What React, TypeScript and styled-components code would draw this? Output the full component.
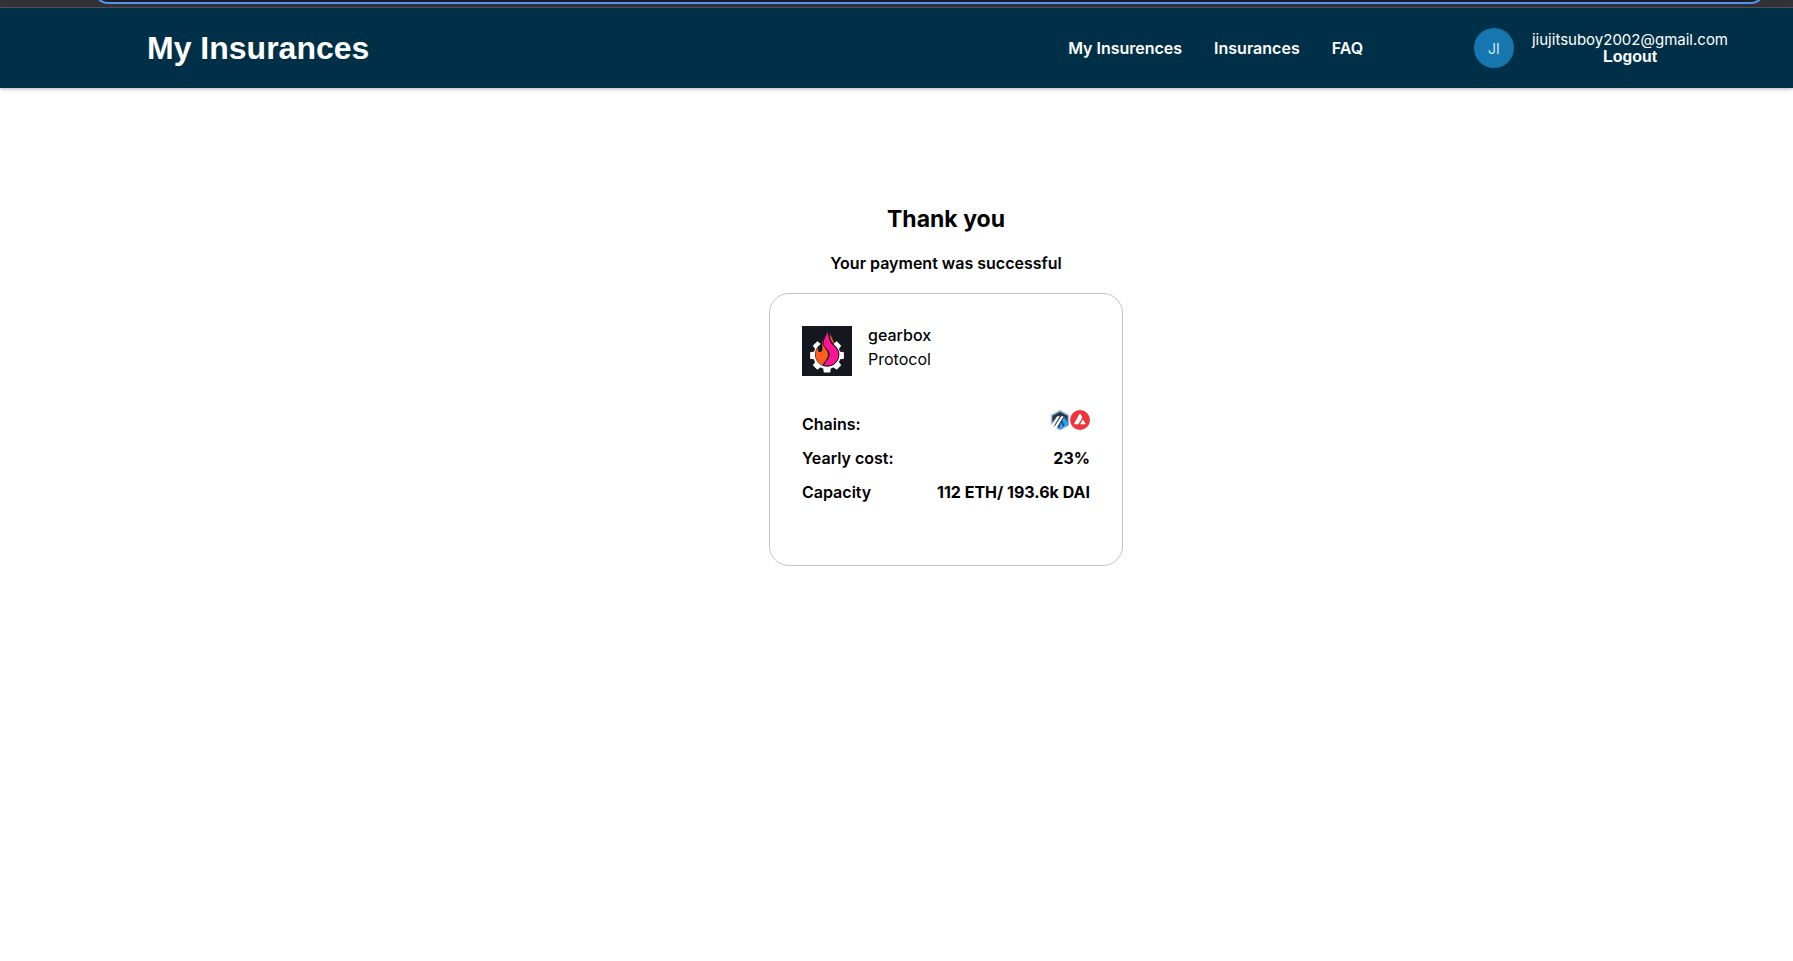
import React from "react";
import styled, { createGlobalStyle } from "styled-components";

const GlobalStyle = createGlobalStyle`
  *, *::before, *::after {
    box-sizing: border-box;
  }
  body {
    margin: 0;
    background: #ffffff;
    color: #000000;
    font-family: Inter, "Liberation Sans", sans-serif;
    font-size: 16px;
    line-height: 19px;
  }
  h1, h2, p, dl, dt, dd {
    margin: 0;
  }
`;

const BrowserEdge = styled.div`
  display: flex;
  align-items: flex-end;
  height: 8px;
  padding: 0 28px 3px 94px;
  overflow: hidden;
  background: #323135;
  border-bottom: 1px solid #58585b;
`;

const AddressBar = styled.div`
  flex: 1;
  height: 32px;
  background: #1f1f22;
  border: 2px solid #5394f6;
  border-radius: 14px;
`;

const Header = styled.header`
  display: flex;
  align-items: center;
  height: 80px;
  padding: 0 63px 0 147px;
  background: #003047;
  color: #ffffff;
  box-shadow: 0 1px 4px rgba(0, 0, 0, 0.3);
`;

const Brand = styled.h1`
  font: 700 32px/40px "Liberation Sans", Arial, sans-serif;
`;

const Nav = styled.nav`
  display: flex;
  gap: 32px;
  margin-left: auto;
`;

const NavLink = styled.a`
  color: inherit;
  font-weight: 600;
  text-decoration: none;
`;

const Account = styled.div`
  display: flex;
  align-items: center;
  gap: 16px;
  margin-left: 111px;
`;

const Avatar = styled.div`
  display: grid;
  place-items: center;
  width: 40px;
  height: 40px;
  border-radius: 50%;
  background: #1676b0;
  color: #d5e8f3;
  font-size: 14px;
`;

const AccountDetails = styled.div`
  display: flex;
  flex-direction: column;
  align-items: center;
  min-width: 200px;
  font-size: 15px;
  line-height: 17px;
`;

const LogoutButton = styled.button`
  padding: 0;
  border: 0;
  background: none;
  color: inherit;
  font: 700 16px/17px "Liberation Sans", Arial, sans-serif;
  cursor: pointer;
`;

const Main = styled.main`
  display: flex;
  flex-direction: column;
  align-items: center;
  padding: 117px 0 48px 99px;
`;

const Title = styled.h2`
  font-size: 23px;
  font-weight: 700;
  line-height: 29px;
`;

const Message = styled.p`
  margin-top: 20px;
  font-weight: 600;
`;

const Card = styled.section`
  width: 354px;
  max-width: 100%;
  margin-top: 20px;
  padding: 32px 32px 63px;
  border: 1px solid #c4c4c4;
  border-radius: 20px;
`;

const Protocol = styled.div`
  display: flex;
  gap: 16px;
`;

const ProtocolText = styled.div`
  display: flex;
  flex-direction: column;
  gap: 5px;
`;

const ProtocolName = styled.p`
  font-weight: 500;
`;

const Details = styled.dl`
  display: flex;
  flex-direction: column;
  gap: 15px;
  margin-top: 34px;
  font-weight: 600;
`;

const DetailRow = styled.div`
  display: flex;
  align-items: flex-end;
  justify-content: space-between;
`;

const DetailValue = styled.dd`
  font-weight: 700;
`;

const Chains = styled.dd`
  display: flex;
  height: 24px;
`;

const GearboxLogo = () => (
  <svg width="50" height="50" viewBox="0 0 50 50" role="img" aria-label="gearbox logo">
    <rect width="50" height="50" fill="#161820" />
    <g fill="#ffffff">
      {[0, 45, 90, 135, 180, 225, 270, 315].map((angle) => (
        <path key={angle} d="M21 18 L21.8 12.6 H28.2 L29 18Z" transform={`rotate(${angle} 25 29.5)`} />
      ))}
      <circle cx="25" cy="29.5" r="13.6" />
    </g>
    <circle cx="25" cy="28.5" r="12" fill="#161820" />
    <path d="M18.5 11 H32 V21 H18.5Z" fill="#161820" />
    <path
      d="M20.4 13.5 C19.8 17.5 20.6 20 20.4 23.2 C20.2 26.2 16.8 27.2 16 24.6 C15.6 23.4 15.8 22.2 16.2 21 C14.2 23.4 13.4 26 13.6 29.2 C13.8 34.2 16.7 37.8 20.8 39.2 C21.4 35.7 26 33.5 26 28.4 C25.9 24 20.5 21 20.4 13.5Z"
      fill="#ff5d1c"
    />
    <path d="M28.5 7.5 C27.4 12.2 29 14.5 31.6 18 C32.4 14.5 29 12 28.5 7.5Z" fill="#ff5d1c" />
    <path
      d="M25 4.2 C25 9.5 20.6 12.6 21.2 17.7 C21.8 22.2 27.7 23.8 27.2 29.4 C26.8 34.2 22.1 35 21.5 39.3 C29 42 37 36.5 36.9 28.4 C36.8 21.8 31.6 20.6 28.6 15.8 C26.8 12.5 27.6 9 25 4.2Z"
      fill="#ff1493"
      stroke="#161820"
      strokeWidth="1"
    />
  </svg>
);

const ArbitrumIcon = () => (
  <svg width="20" height="20" viewBox="0 0 20 20" role="img" aria-label="Arbitrum">
    <path d="M10 0.8 L18.4 5.4 V14.8 L10 19.6 L1.6 14.8 V5.4Z" fill="#2d374b" stroke="#96bedc" strokeWidth="1.6" strokeLinejoin="round" />
    <path d="M12.1 10.5 L14.1 6.8 L18.4 13.7 V15 L15 17Z" fill="#28a0f0" />
    <path d="M11.2 12.2 L14 17.4 L10.3 19.4 L9 17.8Z" fill="#28a0f0" />
    <path d="M7.3 6.2 H9.8 L2.9 17.4 L0.5 15.8Z M11.3 6.2 H13.6 L6.2 18.8 L3.9 17.5Z" fill="#ffffff" />
  </svg>
);

const AvalancheIcon = () => (
  <svg width="20" height="20" viewBox="0 0 20 20" role="img" aria-label="Avalanche">
    <circle cx="10" cy="10" r="10" fill="#f0343c" />
    <path
      d="M9.3 4.3 Q10 3.1 10.7 4.3 L12 6.8 Q12.4 7.5 12 8.2 L8.7 13.7 Q8.2 14.3 7.4 14.3 H4.8 Q3.7 14.3 4.3 13.2Z M12.2 10.6 Q12.9 9.5 13.5 10.6 L15.5 13.5 Q15.9 14.3 15 14.3 H11 Q10 14.3 10.5 13.4Z"
      fill="#ffffff"
    />
  </svg>
);

export default function App() {
  return (
    <>
      <GlobalStyle />
      <BrowserEdge>
        <AddressBar />
      </BrowserEdge>
      <Header>
        <Brand>My Insurances</Brand>
        <Nav aria-label="Main">
          <NavLink href="#my-insurences">My Insurences</NavLink>
          <NavLink href="#insurances">Insurances</NavLink>
          <NavLink href="#faq">FAQ</NavLink>
        </Nav>
        <Account>
          <Avatar>JI</Avatar>
          <AccountDetails>
            <span>jiujitsuboy2002@gmail.com</span>
            <LogoutButton type="button">Logout</LogoutButton>
          </AccountDetails>
        </Account>
      </Header>
      <Main>
        <Title>Thank you</Title>
        <Message>Your payment was successful</Message>
        <Card>
          <Protocol>
            <GearboxLogo />
            <ProtocolText>
              <ProtocolName>gearbox</ProtocolName>
              <p>Protocol</p>
            </ProtocolText>
          </Protocol>
          <Details>
            <DetailRow>
              <dt>Chains:</dt>
              <Chains>
                <ArbitrumIcon />
                <AvalancheIcon />
              </Chains>
            </DetailRow>
            <DetailRow>
              <dt>Yearly cost:</dt>
              <DetailValue>23%</DetailValue>
            </DetailRow>
            <DetailRow>
              <dt>Capacity</dt>
              <DetailValue>112 ETH/ 193.6k DAI</DetailValue>
            </DetailRow>
          </Details>
        </Card>
      </Main>
    </>
  );
}
